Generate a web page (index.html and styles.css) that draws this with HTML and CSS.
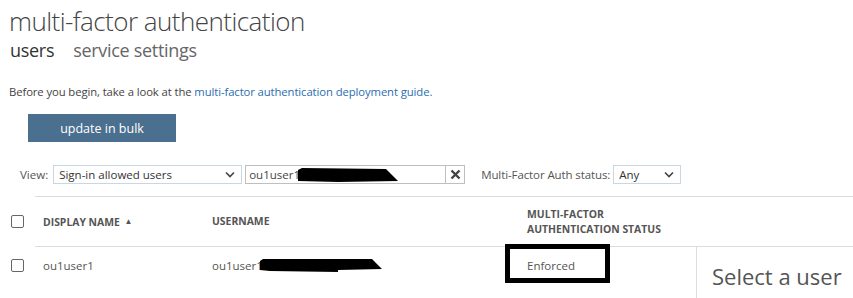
FILE: index.html
```html
<!DOCTYPE html>
<html>
<head>
<meta charset="utf-8">
<link rel="stylesheet" href="styles.css">
</head>
<body>
<div class="page">
  <h1 class="title">multi-factor authentication</h1>
  <div class="tabs">
    <span class="tab active">users</span>
    <span class="tab">service settings</span>
  </div>
  <p class="intro">Before you begin, take a look at the <a class="link">multi-factor authentication deployment guide.</a></p>
  <div class="btn-row"><button class="bulk">update in bulk</button></div>
  <div class="filters">
    <span class="lbl">View:</span>
    <div class="select view-select"><span>Sign-in allowed users</span>
      <svg class="chev" width="10" height="7" viewBox="0 0 10 7"><polyline points="1,1.5 5,5.5 9,1.5" fill="none" stroke="#444" stroke-width="1.6"/></svg>
    </div>
    <div class="search">
      <span class="search-text">ou1user1</span>
      <svg class="redact-s" width="104" height="14" viewBox="0 0 104 14"><polygon points="0,2 4,0 88,1 100,13 40,14 0,13" fill="#000"/></svg>
      <span class="clear"><svg width="11" height="11" viewBox="0 0 11 11"><path d="M1.5 1.5 L9.5 9.5 M9.5 1.5 L1.5 9.5" stroke="#444" stroke-width="2.4"/></svg></span>
    </div>
    <span class="lbl lbl2">Multi-Factor Auth status:</span>
    <div class="select any-select"><span>Any</span>
      <svg class="chev" width="10" height="7" viewBox="0 0 10 7"><polyline points="1,1.5 5,5.5 9,1.5" fill="none" stroke="#444" stroke-width="1.6"/></svg>
    </div>
  </div>
  <div class="thead">
    <div class="c-check"><span class="cb"></span></div>
    <div class="c-name th">DISPLAY NAME <span class="sort">&#9650;</span></div>
    <div class="c-user th">USERNAME</div>
    <div class="c-mfa th">MULTI-FACTOR<br>AUTHENTICATION STATUS</div>
  </div>
  <div class="tbody">
    <div class="rows">
      <div class="row">
        <div class="c-check"><span class="cb"></span></div>
        <div class="c-name td">ou1user1</div>
        <div class="c-user td">ou1user1<svg class="redact-u" width="124" height="14" viewBox="0 0 124 14"><polygon points="0,2 3,0 112,0 122,10 78,11 78,13 10,12 0,11" fill="#000"/></svg></div>
        <div class="c-mfa td"><span class="status">Enforced</span></div>
      </div>
    </div>
    <div class="detail">Select a user</div>
  </div>
</div>
</body>
</html>
```

FILE: styles.css
```css
* { box-sizing: border-box; }
html, body { margin: 0; padding: 0; background: #fff; }
body { font-family: "Open Sans", "Noto Sans", sans-serif; color: #333; overflow: hidden; width: 853px; height: 298px; }
.page { width: 853px; }
.title {
  margin: 0; padding: 3px 0 0 9px;
  font-size: 26px; font-weight: 300; line-height: 36px; color: #444;
  letter-spacing: -0.55px;
}
.tabs { padding-left: 10px; height: 24px; display: flex; gap: 19px; }
.tab { font-size: 18px; line-height: 22px; color: #666; font-weight: 400; letter-spacing: -0.3px; }
.tab.active { color: #333; }
.intro { margin: 0; padding: 21px 0 0 9px; font-size: 11.3px; line-height: 16px; color: #444; letter-spacing: -0.1px; }
.link { color: #2a6db0; }
.btn-row { padding: 14px 0 0 28px; }
.bulk {
  width: 148px; height: 28px; border: 0; background: #4b6f8f; color: #fff;
  font-family: inherit; font-size: 12.5px; padding: 0; display: block;
}
.filters { display: flex; align-items: center; padding: 22px 0 0 20px; height: 42px; font-size: 11.5px; color: #444; }
.lbl { color: #555; margin-right: 5px; }
.select {
  height: 19px; border: 1px solid #c9d7e4; display: flex; align-items: center; justify-content: space-between;
  padding: 0 6px 0 5px; color: #333;
}
.view-select { width: 189px; }
.chev { display: block; }
.search {
  margin-left: 3px; width: 220px; height: 19px; border: 1px solid #bfbfbf; display: flex; align-items: center; position: relative;
  padding-left: 3px;
}
.search-text { color: #444; }
.redact-s { margin-left: -2px; margin-top: 2px; }
.clear {
  position: absolute; right: -1px; top: -1px; width: 20px; height: 19px; border: 1px solid #bfbfbf;
  display: flex; align-items: center; justify-content: center; background: #fff;
}
.lbl2 { margin-left: 16px; margin-right: 3px; letter-spacing: -0.1px; }
.any-select { width: 68px; margin-left: 0; }
.thead {
  margin-left: 35px; border-top: 1px solid #dcdcdc; border-bottom: 1px solid #dcdcdc;
  height: 51px; display: flex; align-items: center; margin-top: 12px;
}
.c-check { width: 35px; margin-left: -35px; padding-left: 11px; display: flex; }
.cb { width: 13px; height: 13px; border: 1px solid #666; border-radius: 2px; display: block; }
.c-name { width: 169px; padding-left: 8px; }
.c-user { width: 315px; padding-left: 8px; display: flex; align-items: center; }
.c-mfa { padding-left: 8px; }
.th { font-size: 10.4px; font-weight: 700; color: #555; line-height: 15px; }
.sort { font-size: 8px; vertical-align: 2px; margin-left: 2px; }
.tbody { display: flex; margin-left: 35px; height: 52px; }
.rows { width: 661px; }
.row { display: flex; align-items: center; height: 36px; }
.td { font-size: 11.5px; color: #555; }
.redact-u { margin-left: -3px; margin-top: 2px; }
.status { position: relative; }
.status::before {
  content: ""; position: absolute; left: -22px; top: -14px; width: 95px; height: 29px;
  border: 5px solid #000;
}
.detail {
  border-left: 1px solid #dcdcdc; padding: 15px 0 0 15px; font-size: 22px; color: #555; flex: 1; line-height: 28px;
}
```
